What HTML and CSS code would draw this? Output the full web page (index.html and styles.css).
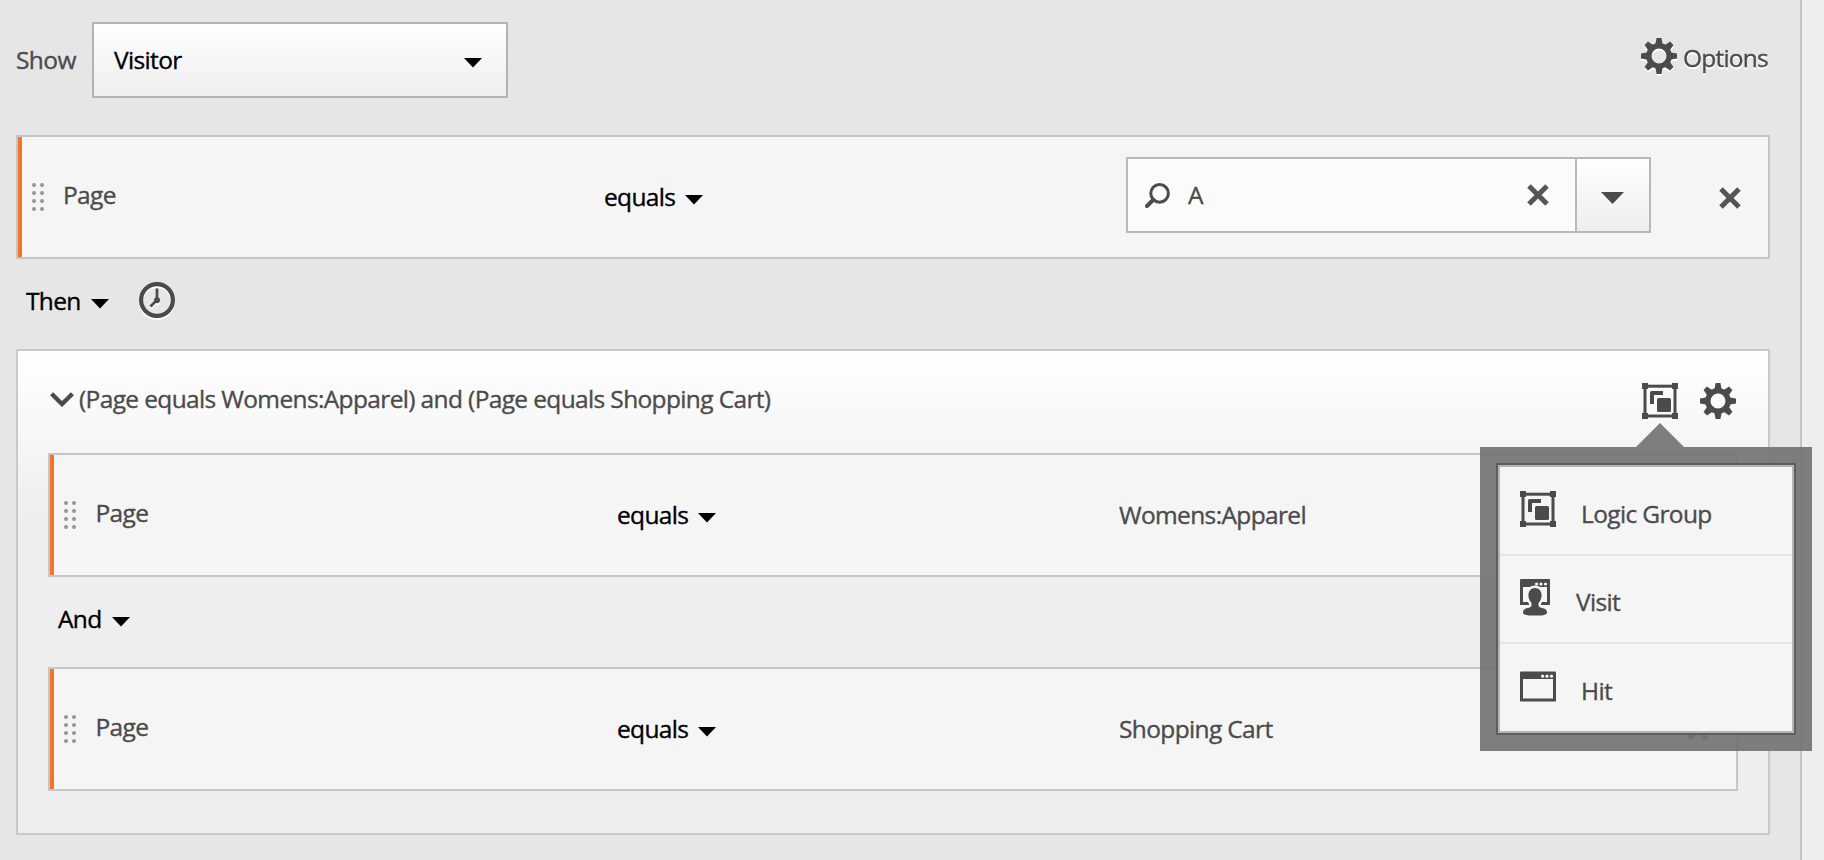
FILE: index.html
```html
<!DOCTYPE html>
<html lang="en">
<head>
<meta charset="utf-8">
<title>Segment builder</title>
<link rel="stylesheet" href="styles.css">
</head>
<body>
<svg class="sprite" aria-hidden="true">
  <defs>
    <symbol id="caret" viewBox="0 0 18 10"><path d="M0 0H18L9 9.5Z"/></symbol>
    <symbol id="caret-tall" viewBox="0 0 23 12"><path d="M0 0H23L11.5 12Z"/></symbol>
    <symbol id="cross" viewBox="0 0 22 22"><path d="M2 2L20 20M20 2L2 20" fill="none" stroke="currentColor" stroke-width="5"/></symbol>
    <symbol id="grip" viewBox="0 0 12 28">
      <circle cx="2" cy="2" r="2"/><circle cx="10" cy="2" r="2"/>
      <circle cx="2" cy="10" r="2"/><circle cx="10" cy="10" r="2"/>
      <circle cx="2" cy="18" r="2"/><circle cx="10" cy="18" r="2"/>
      <circle cx="2" cy="26" r="2"/><circle cx="10" cy="26" r="2"/>
    </symbol>
    <symbol id="gear" viewBox="-18 -18 36 36">
      <circle r="10.2" fill="none" stroke="currentColor" stroke-width="5.4"/>
      <g id="teeth">
        <path id="tooth" d="M-3.6 -12L-2.4 -18H2.4L3.6 -12Z"/>
        <use href="#tooth" transform="rotate(45)"/><use href="#tooth" transform="rotate(90)"/>
        <use href="#tooth" transform="rotate(135)"/><use href="#tooth" transform="rotate(180)"/>
        <use href="#tooth" transform="rotate(225)"/><use href="#tooth" transform="rotate(270)"/>
        <use href="#tooth" transform="rotate(315)"/>
      </g>
    </symbol>
    <symbol id="clock" viewBox="0 0 36 36">
      <circle cx="18" cy="18" r="15.9" fill="none" stroke="currentColor" stroke-width="4.2"/>
      <path d="M18 6.5V18L11.5 24.5" fill="none" stroke="currentColor" stroke-width="2.8"/>
      <circle cx="18" cy="18.3" r="3"/>
    </symbol>
    <symbol id="group" viewBox="0 0 36 36">
      <path d="M0 0H6V6H0ZM30 0H36V6H30ZM0 30H6V36H0ZM30 30H36V36H30Z"/>
      <rect x="3" y="3.2" width="30" height="29.8" fill="none" stroke="currentColor" stroke-width="3"/>
      <path d="M9.5 8H21V12H12V21H8V9.5A1.5 1.5 0 0 1 9.5 8Z"/>
      <rect x="15" y="15" width="14" height="14" rx="1.5"/>
    </symbol>
    <symbol id="visit" viewBox="0 0 30 37">
      <path fill-rule="evenodd" d="M1 0H29A1 1 0 0 1 30 1V26H0V1A1 1 0 0 1 1 0ZM3 8V23H27V8Z"/>
      <path class="halo" d="M15 9C19.2 9 21.6 12.2 21.6 16.5C21.6 19.8 20 22.2 18.6 23.8C18.2 26.5 18.5 28 21 28.7C25 29.5 27 30.5 27 33.5C27 35.5 25 36.6 15 36.6C5 36.6 3 35.5 3 33.5C3 30.5 5 29.5 9 28.7C11.5 28 11.8 26.5 11.4 23.8C10 22.2 8.4 19.8 8.4 16.5C8.4 12.2 10.8 9 15 9Z"/>
      <g class="knockout"><circle cx="16.6" cy="5" r="1.6"/><circle cx="21" cy="5" r="1.6"/><circle cx="25.5" cy="5" r="1.6"/></g>
      <path d="M15 9C19.2 9 21.6 12.2 21.6 16.5C21.6 19.8 20 22.2 18.6 23.8C18.2 26.5 18.5 28 21 28.7C25 29.5 27 30.5 27 33.5C27 35.5 25 36.6 15 36.6C5 36.6 3 35.5 3 33.5C3 30.5 5 29.5 9 28.7C11.5 28 11.8 26.5 11.4 23.8C10 22.2 8.4 19.8 8.4 16.5C8.4 12.2 10.8 9 15 9Z"/>
    </symbol>
    <symbol id="hit" viewBox="0 0 36 31">
      <path fill-rule="evenodd" d="M1 0.4H35A1 1 0 0 1 36 1.4V30.6H0V1.4A1 1 0 0 1 1 0.4ZM3 8V27.6H33V8Z"/>
      <g class="knockout"><circle cx="22.6" cy="5.2" r="1.6"/><circle cx="27" cy="5.2" r="1.6"/><circle cx="31.5" cy="5.2" r="1.6"/></g>
    </symbol>
  </defs>
</svg>

<main class="builder">
  <header class="toolbar">
    <span class="show-label">Show</span>
    <div class="select"><span>Visitor</span><svg class="caret"><use href="#caret"/></svg></div>
    <div class="options raised"><svg class="icon"><use href="#gear"/></svg><span>Options</span></div>
  </header>

  <section class="rule rule-outer">
    <svg class="grip"><use href="#grip"/></svg>
    <span class="name">Page</span>
    <span class="operator">equals<svg class="caret"><use href="#caret"/></svg></span>
    <div class="search">
      <div class="field">
        <svg class="lens" viewBox="0 0 25 25"><circle cx="14.6" cy="10.4" r="8.8" fill="none" stroke="currentColor" stroke-width="3"/><path d="M8.3 16.8L2 23" stroke="currentColor" stroke-width="4" stroke-linecap="round"/></svg>
        <span>A</span>
        <svg class="cross"><use href="#cross"/></svg>
      </div>
      <div class="drop"><svg class="caret-tall"><use href="#caret-tall"/></svg></div>
    </div>
    <svg class="cross remove"><use href="#cross"/></svg>
  </section>

  <div class="joiner">
    <span>Then</span><svg class="caret"><use href="#caret"/></svg>
    <svg class="icon clock raised"><use href="#clock"/></svg>
  </div>

  <section class="group">
    <div class="group-head">
      <svg class="chevron" viewBox="0 0 24 15"><path d="M1.6 1.8L12 12L22.4 1.8" fill="none" stroke="currentColor" stroke-width="4.4"/></svg>
      <span class="group-title">(Page equals Womens:Apparel) and (Page equals Shopping Cart)</span>
      <div class="anchor">
        <svg class="icon"><use href="#group"/></svg>
        <div class="popover">
          <ul class="menu">
            <li class="item"><svg class="icon"><use href="#group"/></svg><span>Logic Group</span></li>
            <li class="item item-visit"><svg class="icon-visit"><use href="#visit"/></svg><span>Visit</span></li>
            <li class="item item-hit"><svg class="icon-hit"><use href="#hit"/></svg><span>Hit</span></li>
          </ul>
        </div>
      </div>
      <svg class="icon"><use href="#gear"/></svg>
    </div>

    <div class="rule rule-inner">
      <svg class="grip"><use href="#grip"/></svg>
      <span class="name">Page</span>
      <span class="operator">equals<svg class="caret"><use href="#caret"/></svg></span>
      <span class="value">Womens:Apparel</span>
      <svg class="cross remove"><use href="#cross"/></svg>
    </div>

    <div class="joiner"><span>And</span><svg class="caret"><use href="#caret"/></svg></div>

    <div class="rule rule-inner">
      <svg class="grip"><use href="#grip"/></svg>
      <span class="name">Page</span>
      <span class="operator">equals<svg class="caret"><use href="#caret"/></svg></span>
      <span class="value">Shopping Cart</span>
      <svg class="cross remove"><use href="#cross"/></svg>
    </div>
  </section>
</main>
</body>
</html>
```
FILE: styles.css
```css
* { box-sizing: border-box; }

body {
  margin: 0;
  height: 860px;
  overflow: hidden;
  background: #eeeeee;
  color: #4b4b4b;
  font: 24.5px/34px "Open Sans", "Noto Sans", sans-serif;
  letter-spacing: -0.64px;
  -webkit-text-stroke: 0.35px currentColor;
  white-space: nowrap;
}

svg { display: block; flex: none; fill: currentColor; }
.sprite { position: absolute; width: 0; height: 0; }
.icon { width: 36px; height: 36px; }
.caret { width: 18px; height: 10px; margin-top: 15px; }
.cross { width: 22px; height: 22px; color: #555555; }
.knockout { fill: #f5f5f5; }
.halo { fill: #f5f5f5; stroke: #f5f5f5; stroke-width: 5px; }
.raised { filter: drop-shadow(0 2px 0 #ffffff); }

.builder {
  width: 1802px;
  height: 860px;
  padding: 22px 30px 0 16px;
  background: #e6e6e6;
  border-right: 2px solid #c4c4c4;
}

.toolbar { display: flex; height: 76px; margin-bottom: 37px; }
.show-label { width: 76px; padding-top: 20.5px; letter-spacing: -0.6px; }
.select {
  display: flex;
  justify-content: space-between;
  width: 416px;
  padding: 18.5px 24px 0 20px;
  border: 2px solid #b3b3b3;
  background: linear-gradient(#ffffff, #eeeeee);
  color: #000000;
}
.options { display: flex; gap: 6px; margin-left: auto; padding-top: 16px; width: 129px; letter-spacing: -0.8px; }
.options span { padding-top: 2.5px; }

.rule {
  display: grid;
  align-items: start;
  height: 124px;
  border: 2px solid #c6c6c6;
  background: #f5f5f5;
  box-shadow: inset 4px 0 0 #f1762d;
}
.rule-outer { grid-template-columns: 45px 541px 522px 593px 22px; }
.rule-inner { grid-template-columns: 45.5px 521.5px 502px 568px 22px; }
.grip { width: 12px; height: 28px; margin: 46px 0 0 14px; color: #949494; }
.name { padding-top: 40.5px; }
.operator { display: flex; gap: 9.5px; padding-top: 42.5px; color: #000000; }
.value { padding-top: 42.5px; }
.remove { margin-top: 50px; }

.search { display: flex; width: 525px; height: 76px; margin-top: 20px; border: 2px solid #b8b8b8; }
.field { display: flex; flex: 1; background: #fbfbfb; padding-left: 17px; }
.field span { flex: 1; padding: 18.5px 0 0 18px; }
.field .cross { margin: 25px 26px 0 0; }
.lens { width: 25px; height: 25px; margin-top: 24px; }
.drop { width: 74px; padding: 33px 0 0 24px; border-left: 2px solid #b8b8b8; background: linear-gradient(#ffffff, #eeeeee); }
.caret-tall { width: 23px; height: 12px; }

.joiner { display: flex; height: 90px; padding: 24.5px 0 0 10px; color: #000000; }
.joiner .caret { margin-left: 10px; }
.clock { margin: -1.5px 0 0 30px; color: #4b4b4b; }

.group {
  height: 486px;
  padding: 0 30px;
  border: 2px solid #c9c9c9;
  background: linear-gradient(#ffffff, #eeeeee 165px);
}
.group-head { display: flex; height: 102px; padding: 31px 2px 0; }
.group-title { flex: 1; padding-left: 5px; }
.chevron { width: 24px; height: 15px; margin-top: 10px; }
.anchor { position: relative; width: 36px; height: 36px; margin: 1px 22px 0 0; }
.group-head > .icon { margin-top: 1px; }

/* Frame stays slightly translucent so the rows show through it. */
.popover {
  position: absolute;
  top: 64px;
  right: -134px;
  width: 332px;
  height: 304px;
  padding: 16px;
  background: rgba(117, 117, 117, 0.935);
}
.popover::before {
  content: "";
  position: absolute;
  left: 156px;
  top: -24px;
  border: solid transparent;
  border-width: 0 24px 24px;
  border-bottom-color: #7e7e7e;
}
.menu {
  width: 300px;
  height: 272px;
  margin: 0;
  list-style: none;
  border: 2px solid #5e5e5e;
  outline: 2px solid #b4b4b4;
  outline-offset: -4px;
  background: #f5f5f5;
  padding: 2px;
}
.item { display: flex; height: 89px; padding: 24px 0 0 20px; border-bottom: 2px solid #e5e5e5; }
.item span { padding: 5.5px 0 0 25px; }
.item-visit { height: 88px; padding-top: 23px; }
.item-visit span { padding: 6px 0 0 26px; }
.item-hit { height: 87px; padding-top: 27px; border-bottom: 0; }
.item-hit span { padding-top: 2.5px; }
.icon-visit { width: 30px; height: 37px; }
.icon-hit { width: 36px; height: 31px; }
```
